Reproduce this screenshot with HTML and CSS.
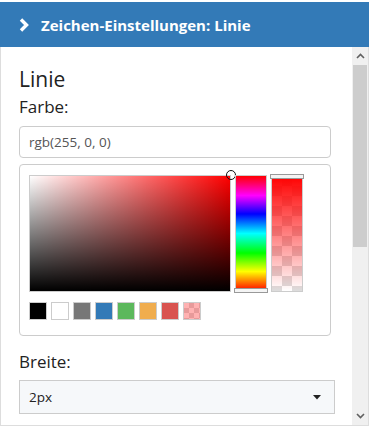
FILE: index.html
```html
<!DOCTYPE html>
<html lang="de">
<head>
<meta charset="utf-8">
<link rel="stylesheet" href="styles.css">
</head>
<body>
<div class="panel">
  <div class="header">
    <svg class="chev" width="10" height="14" viewBox="0 0 10 14"><polyline points="2,1.5 7.5,7 2,12.5" fill="none" stroke="#fff" stroke-width="3.4"/></svg>
    <span class="title">Zeichen-Einstellungen: Linie</span>
  </div>
  <div class="body">
    <div class="content">
      <div class="heading">Linie</div>
      <div class="label">Farbe:</div>
      <div class="input">rgb(255, 0, 0)</div>
      <div class="picker">
        <div class="picker-row">
          <div class="sat">
            <div class="cursor"></div>
          </div>
          <div class="hue"><div class="hue-handle"></div></div>
          <div class="alpha"><div class="alpha-fill"></div><div class="alpha-handle"></div></div>
        </div>
        <div class="swatches">
          <span class="sw sw-black"></span>
          <span class="sw sw-white"></span>
          <span class="sw sw-gray"></span>
          <span class="sw sw-blue"></span>
          <span class="sw sw-green"></span>
          <span class="sw sw-orange"></span>
          <span class="sw sw-red"></span>
          <span class="sw sw-trans"><span class="sw-trans-fill"></span></span>
        </div>
      </div>
      <div class="label label-breite">Breite:</div>
      <div class="select">
        <span>2px</span>
        <svg width="8" height="5" viewBox="0 0 8 5"><polygon points="0,0 8,0 4,4.5" fill="#222"/></svg>
      </div>
      <div class="spacer"></div>
    </div>
    <div class="scrollbar">
      <div class="sb-arrow">
        <svg width="9" height="6" viewBox="0 0 9 6"><polyline points="1,5 4.5,1.5 8,5" fill="none" stroke="#606060" stroke-width="1.6"/></svg>
      </div>
      <div class="sb-track"><div class="sb-thumb"></div></div>
      <div class="sb-arrow">
        <svg width="9" height="6" viewBox="0 0 9 6"><polyline points="1,1 4.5,4.5 8,1" fill="none" stroke="#606060" stroke-width="1.6"/></svg>
      </div>
    </div>
  </div>
</div>
</body>
</html>
```
FILE: styles.css
```css
html, body {
  margin: 0;
  padding: 0;
  background: #fff;
}
body {
  font-family: "Open Sans", "Noto Sans", sans-serif;
  color: #222;
  width: 370px;
  height: 427px;
  overflow: hidden;
}
.panel {
  margin-top: 2px;
  width: 369px;
}
.header {
  height: 45px;
  background: #337ab7;
  display: flex;
  align-items: center;
  padding-left: 19px;
  box-sizing: border-box;
  color: #fff;
}
.chev {
  display: block;
  margin-right: 12px;
  margin-top: 1px;
}
.title {
  font-size: 15px;
  font-weight: 700;
  line-height: 20px;
}
.body {
  display: flex;
  height: 378px;
  border-left: 1px solid #ddd;
  border-right: 1px solid #ddd;
  border-bottom: 1px solid #ddd;
}
.content {
  flex: 1;
  overflow: hidden;
  padding: 20px 0 0 18px;
}
.heading {
  font-size: 21px;
  line-height: 24px;
  color: #222;
}
.label {
  font-size: 17px;
  line-height: 20px;
  margin-top: 6px;
  color: #222;
}
.input {
  margin-top: 9px;
  width: 312px;
  height: 32px;
  box-sizing: border-box;
  border: 1px solid #ccc;
  border-radius: 4px;
  font-size: 13.5px;
  color: #555;
  padding-left: 9px;
  display: flex;
  align-items: center;
}
.picker {
  margin-top: 6px;
  width: 312px;
  height: 172px;
  box-sizing: border-box;
  border: 1px solid #ccc;
  border-radius: 4px;
  padding: 10px 0 0 9px;
}
.picker-row {
  display: flex;
  gap: 4px;
  height: 117px;
}
.sat {
  position: relative;
  width: 202px;
  box-sizing: border-box;
  border: 1px solid #ccc;
  background:
    linear-gradient(to top, #000, rgba(0,0,0,0)),
    linear-gradient(to right, #fff, rgba(255,255,255,0)),
    #f00;
}
.cursor {
  position: absolute;
  right: -6px;
  top: -6px;
  width: 8px;
  height: 8px;
  border: 1.5px solid #111;
  border-radius: 50%;
}
.hue {
  position: relative;
  width: 32px;
  box-sizing: border-box;
  border: 1px solid #ccc;
  background: linear-gradient(to bottom, #f00 0%, #f0f 17%, #00f 33%, #0ff 50%, #0f0 67%, #ff0 83%, #f00 100%);
}
.hue-handle {
  position: absolute;
  left: -2px;
  right: -2px;
  bottom: -2px;
  height: 3px;
  background: #f4f4f4;
  border: 1px solid #999;
}
.alpha {
  position: relative;
  width: 32px;
  box-sizing: border-box;
  border: 1px solid #ccc;
  background-color: #fff;
  background-image:
    linear-gradient(45deg, #ddd 25%, transparent 25%, transparent 75%, #ddd 75%),
    linear-gradient(45deg, #ddd 25%, transparent 25%, transparent 75%, #ddd 75%);
  background-size: 20px 20px;
  background-position: 0 0, 10px 10px;
}
.alpha-fill {
  width: 100%;
  height: 100%;
  background: linear-gradient(to bottom, #f00, rgba(255,0,0,0));
}
.alpha-handle {
  position: absolute;
  left: -2px;
  right: -2px;
  top: -2px;
  height: 3px;
  background: #f4f4f4;
  border: 1px solid #999;
}
.swatches {
  display: flex;
  gap: 4px;
  margin-top: 10px;
}
.sw {
  display: block;
  width: 18px;
  height: 18px;
  box-sizing: border-box;
  border: 1px solid #ccc;
}
.sw-black { background: #000; }
.sw-white { background: #fff; }
.sw-gray { background: #777; }
.sw-blue { background: #337ab7; }
.sw-green { background: #5cb85c; }
.sw-orange { background: #f0ad4e; }
.sw-red { background: #d9534f; }
.sw-trans {
  background-color: #fff;
  background-image:
    linear-gradient(45deg, #ddd 25%, transparent 25%, transparent 75%, #ddd 75%),
    linear-gradient(45deg, #ddd 25%, transparent 25%, transparent 75%, #ddd 75%);
  background-size: 10px 10px;
  background-position: 0 0, 5px 5px;
}
.sw-trans-fill {
  display: block;
  width: 100%;
  height: 100%;
  background: rgba(255, 0, 0, 0.3);
}
.label-breite {
  margin-top: 16px;
}
.select {
  margin-top: 8px;
  width: 316px;
  height: 34px;
  box-sizing: border-box;
  border: 1px solid #ccc;
  background: #f6f8fa;
  font-size: 13.5px;
  color: #222;
  padding: 0 9px;
  display: flex;
  align-items: center;
  justify-content: space-between;
}
.select svg {
  margin-right: 4px;
}
.spacer {
  height: 300px;
}
.scrollbar {
  width: 16px;
  display: flex;
  flex-direction: column;
  background: #f0f0f0;
}
.sb-arrow {
  height: 18px;
  display: flex;
  align-items: center;
  justify-content: center;
}
.sb-track {
  flex: 1;
  padding: 0 1px;
}
.sb-thumb {
  height: 182px;
  background: #cdcdcd;
}
```
